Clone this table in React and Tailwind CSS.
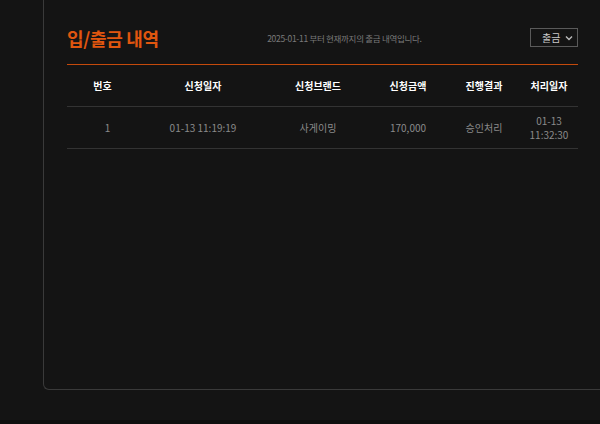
import React from 'react';

const rows = [
  { no: 1, date: '01-13 11:19:19', brand: '사게이밍', amount: '170,000', result: '승인처리', done: ['01-13', '11:32:30'] },
];

const cols = [
  { label: '번호', w: 'w-[71px]' },
  { label: '신청일자', w: 'w-[130px]' },
  { label: '신청브랜드', w: 'w-[100px]' },
  { label: '신청금액', w: 'w-[80px]' },
  { label: '진행결과', w: 'w-[72px]' },
  { label: '처리일자', w: 'w-[58px]' },
];

const font = { fontFamily: '"Noto Sans CJK KR", "Noto Sans", sans-serif' };

const App = () => {
  return (
    <div className="w-[600px] h-[424px] overflow-hidden bg-[#141414] flex flex-col" style={font}>
      <div className="h-[420px] pl-[43px]">
        <div className="h-[390px] border-l border-b border-[#3a3a3a] rounded-bl-[6px] pl-[23px] pr-[22px] pt-[26px]">
          <div className="flex items-center justify-between h-[25px]">
            <h2 className="text-[18px] font-bold text-[#e0560f] leading-none tracking-[-0.3px] -mt-[2px]">입/출금 내역</h2>
            <p className="text-[8.5px] text-[#7a7a7a] tracking-[-0.3px]">2025-01-11 부터 현재까지의 출금 내역입니다.</p>
            <div className="w-[48px] h-[19px] border border-[#5a5a5a] flex items-center justify-between pl-[11px] pr-[4px] -mt-[2px]">
              <span className="text-[10px] text-[#c8c8c8] leading-none">출금</span>
              <svg width="8" height="6" viewBox="0 0 8 6" fill="none">
                <path d="M1 1.5 L4 4.5 L7 1.5" stroke="#bbbbbb" strokeWidth="1.4" />
              </svg>
            </div>
          </div>
          <div className="mt-[13px] h-px bg-[#c44a0c]" />
          <div className="flex h-[42px] items-center border-b border-[#333333]">
            {cols.map((c) => (
              <div key={c.label} className={`${c.w} text-center text-[10px] font-bold text-white`}>
                {c.label}
              </div>
            ))}
          </div>
          {rows.map((r) => (
            <div key={r.no} className="flex h-[42px] items-center border-b border-[#333333] text-[10px] text-[#8a8a8a]">
              <div className="w-[71px] text-center pl-[10px]">{r.no}</div>
              <div className="w-[130px] text-center">{r.date}</div>
              <div className="w-[100px] text-center">{r.brand}</div>
              <div className="w-[80px] text-center">{r.amount}</div>
              <div className="w-[72px] text-center">{r.result}</div>
              <div className="w-[58px] text-center leading-[14px]">
                <div>{r.done[0]}</div>
                <div>{r.done[1]}</div>
              </div>
            </div>
          ))}
        </div>
      </div>
      <div className="flex-1 bg-[#0e0e0e]" />
    </div>
  );
};

export default App;
